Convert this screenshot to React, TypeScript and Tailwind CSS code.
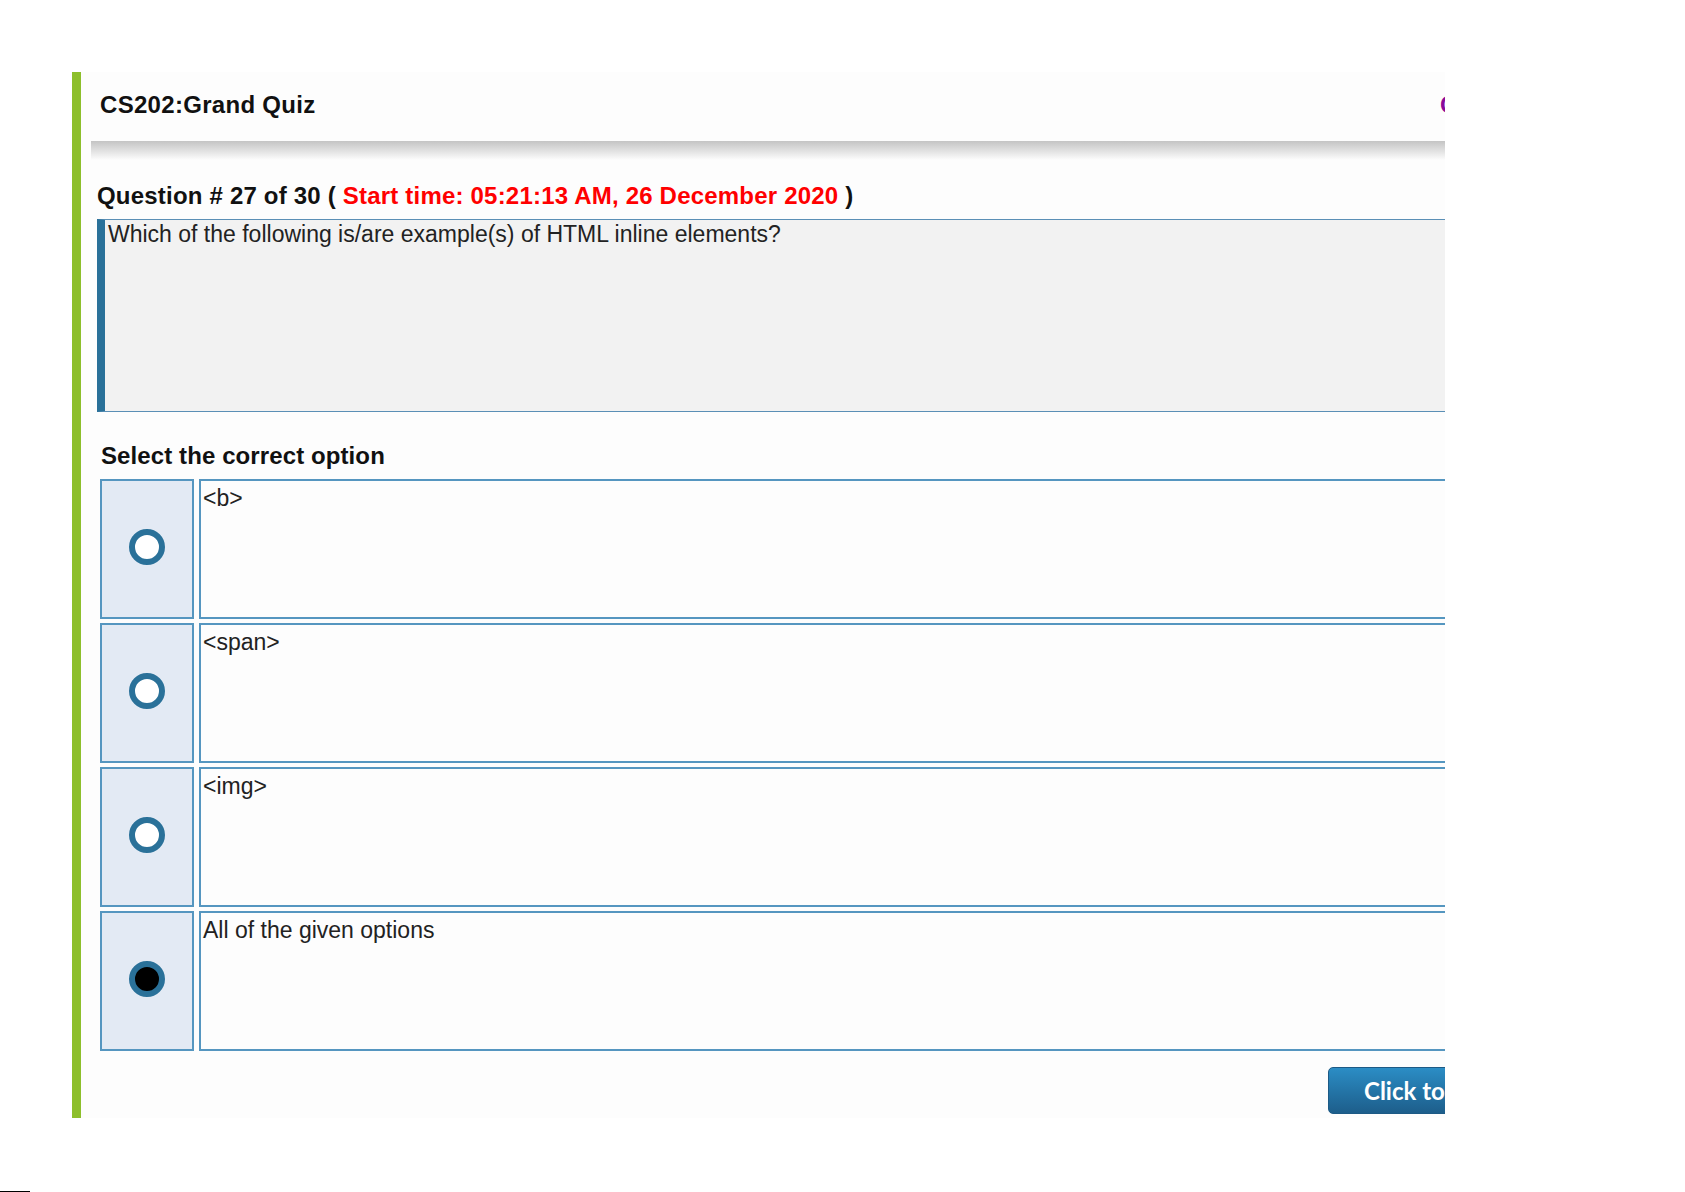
const options = [
  { id: 'a', text: '<b>', checked: false },
  { id: 'b', text: '<span>', checked: false },
  { id: 'c', text: '<img>', checked: false },
  { id: 'd', text: 'All of the given options', checked: true },
];

const App = () => {
  return (
    <div className="h-[1192px] bg-white flex flex-col font-['Liberation_Sans',Arial,sans-serif] leading-[1.15] text-[#111]">
      <div className="pt-[72px] pl-[72px]">
        <div className="w-[1373px] h-[1046px] overflow-hidden border-l-[9px] border-[#8dbf2b] bg-[#fdfdfd]">
          <div className="w-[1580px]">
            {/* header */}
            <div className="ml-[10px] h-[69px] pt-[19px] pl-[9px] grid grid-cols-[1340px_1fr]">
              <h1 className="text-[24px] font-bold tracking-[0.3px]">CS202:Grand Quiz</h1>
              <span className="text-[24px] font-bold text-[#8a0a9a] whitespace-nowrap">Countdown</span>
            </div>
            <div className="ml-[10px] h-[19px] bg-gradient-to-b from-[#c4c4c4] to-[#fdfdfd]" />

            {/* question */}
            <p className="mt-[22px] pl-[16px] text-[24px] font-bold tracking-[0.2px]">
              Question # 27 of 30 ( <span className="text-[#ff0000]">Start time: 05:21:13 AM, 26 December 2020</span> )
            </p>
            <div className="mt-[9px] ml-[16px] h-[193px] border border-[#5b8fb6] border-l-[8px] border-l-[#2a7199] bg-[#f2f2f2] px-[3px] pt-[1px] text-[23px] text-[#222]">
              Which of the following is/are example(s) of HTML inline elements?
            </div>

            <p className="mt-[30px] pl-[20px] text-[24px] font-bold tracking-[0.1px]">Select the correct option</p>

            <div className="mt-[10px] pl-[19px] flex flex-col gap-[4px]">
              {options.map((opt) => (
                <div key={opt.id} className="flex h-[140px] gap-[5px]">
                  <div className="w-[94px] border-2 border-[#5596c0] bg-[#e3eaf4] flex items-center justify-center pb-[4px]">
                    <span
                      className={
                        opt.checked
                          ? 'w-9 h-9 rounded-full border-[6px] border-[#2a7199] bg-black'
                          : 'w-9 h-9 rounded-full border-[6px] border-[#2a7199] bg-white'
                      }
                    />
                  </div>
                  <div className="flex-1 border-2 border-[#5596c0] bg-[#fdfdfd] px-[2px] pt-[4px] text-[23px] text-[#222]">
                    {opt.text}
                  </div>
                </div>
              ))}
            </div>

            <div className="mt-[16px] flex justify-end pr-[33px]">
              <button
                type="button"
                className="w-[300px] h-[47px] rounded-[5px] border border-[#1d5a85] bg-gradient-to-b from-[#2b8dc5] to-[#1d5e8b] pl-[35px] text-left text-[24px] font-bold text-white whitespace-nowrap font-['Lato',sans-serif]"
              >
                Click to Save Answer
              </button>
            </div>
          </div>
        </div>
      </div>
      <div className="mt-auto h-px w-[30px] bg-black" />
    </div>
  );
};

export default App;
